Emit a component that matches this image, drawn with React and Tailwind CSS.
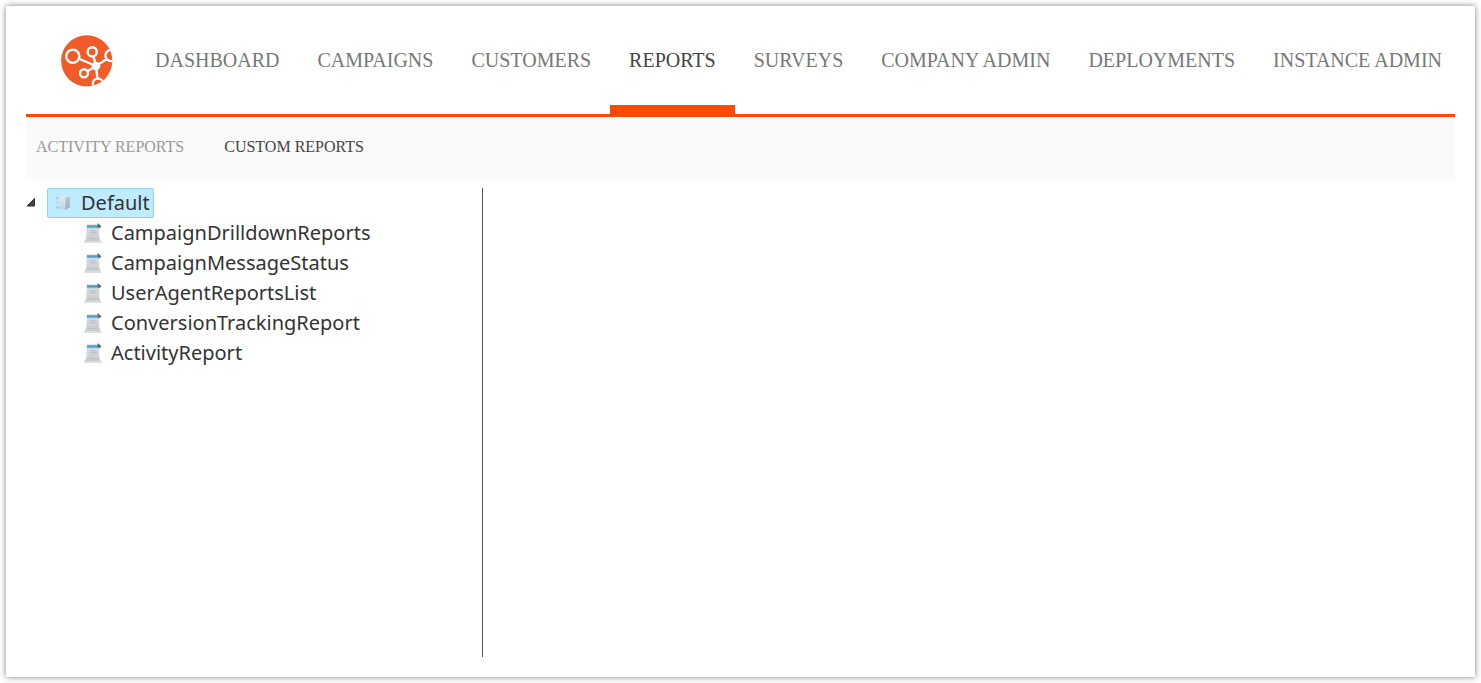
import React, { useState } from "react";

const tabs = [
  "DASHBOARD",
  "CAMPAIGNS",
  "CUSTOMERS",
  "REPORTS",
  "SURVEYS",
  "COMPANY ADMIN",
  "DEPLOYMENTS",
  "INSTANCE ADMIN",
];

const reports = [
  "CampaignDrilldownReports",
  "CampaignMessageStatus",
  "UserAgentReportsList",
  "ConversionTrackingReport",
  "ActivityReport",
];

function Logo() {
  return (
    <svg viewBox="0 0 52 52" className="size-13 shrink-0" role="img" aria-label="Home">
      <defs>
        <clipPath id="disc">
          <circle cx="25.7" cy="25.8" r="25.6" />
        </clipPath>
      </defs>
      <circle cx="25.7" cy="25.8" r="25.6" fill="#f15a29" />
      <g clipPath="url(#disc)" fill="none" stroke="#fff" strokeWidth="2.4">
        <circle cx="11.8" cy="21.2" r="6.6" />
        <circle cx="31.2" cy="16.8" r="4.6" />
        <circle cx="50" cy="20.5" r="5.6" />
        <circle cx="23" cy="38.2" r="4" />
        <circle cx="37" cy="48.8" r="5.2" />
        <path d="M18.5 24 35 31M32.3 21 35 31M45.5 24.2 35 31M26.8 36 35 31M35 31 36.5 43.8" />
        <circle cx="35" cy="31" r="4.3" fill="#fff" stroke="none" />
      </g>
    </svg>
  );
}

function CubeIcon() {
  return (
    <svg viewBox="0 0 20 20" className="size-5 shrink-0" aria-hidden="true">
      <defs>
        <linearGradient id="front" x1="0" y1="0" x2="0" y2="1">
          <stop offset="0" stopColor="#e2eef5" />
          <stop offset="1" stopColor="#bdd3e0" />
        </linearGradient>
        <linearGradient id="side" x1="0" y1="0" x2="0" y2="1">
          <stop offset="0" stopColor="#bccbd5" />
          <stop offset="1" stopColor="#9badba" />
        </linearGradient>
      </defs>
      <path d="M3 4.2 7 3.2V6L3 6.2Z" fill="#a9d3e7" />
      <path d="M3.5 8.5H7V11L3.5 10.6Z" fill="#b0daed" />
      <path d="M3 13 7 13.2V16L3 15Z" fill="#a6cfe2" />
      <path d="M6 3 11 1.8 17 3 12.3 4.8Z" fill="#d9e6ee" />
      <path d="M6 3 12.3 4.8V17L6 15.5Z" fill="url(#front)" />
      <path d="M12.3 4.8 17 3V14L12.3 17Z" fill="url(#side)" />
    </svg>
  );
}

function ReportIcon() {
  return (
    <svg viewBox="0 0 20 20" className="size-5 shrink-0" aria-hidden="true">
      <defs>
        <linearGradient id="paper" x1="0" y1="0" x2="0" y2="1">
          <stop offset="0" stopColor="#e6e8ea" />
          <stop offset="0.5" stopColor="#d2d6d9" />
          <stop offset="1" stopColor="#c3c8cc" />
        </linearGradient>
      </defs>
      <path d="M3.5 1H16.3V14.5L18.3 19.8H1.2L3.3 14.5Z" fill="url(#paper)" />
      <path d="M1.6 18 1 20H18.6L18 18Z" fill="#dcdee0" />
      <path d="M4 2.2H15V4.8H4Z" fill="#4f9fc6" />
      <path d="M4 4.8H15V5.6H4Z" fill="#a9cfe2" />
      <path d="M14.5 0 18.6 3.2 16 5.4 14.5 3.8Z" fill="#5f6b73" />
      <path d="M6.5 7.8h7M6.5 9.8h7" stroke="#b8bdc1" strokeWidth="1" />
      <path d="M5.5 15.5h9" stroke="#bcc1c5" strokeWidth="1" />
    </svg>
  );
}

export default function App() {
  const [open, setOpen] = useState(true);
  return (
    <div className="flex min-h-screen bg-white p-1.5 font-['Liberation_Serif',serif]">
      <div className="flex min-w-0 flex-1 flex-col bg-white px-5 pb-5 shadow-[0_0_6px_rgba(0,0,0,0.5)]">
        <header className="flex h-[111px] items-start border-b-3 border-[#fa4b00]">
          <a href="#home" className="mt-[29px] ml-[35px] shrink-0">
            <Logo />
          </a>
          <nav aria-label="Main" className="ml-[23px] flex h-full">
            {tabs.map((tab) => (
              <a
                key={tab}
                href="#tab"
                aria-current={tab === "REPORTS" ? "page" : undefined}
                className={
                  "h-full px-[19px] pt-[39px] text-xl leading-[30px] whitespace-nowrap " +
                  (tab === "REPORTS"
                    ? "border-b-9 border-[#fa4b00] text-[#444]"
                    : "text-[#777]")
                }
              >
                {tab}
              </a>
            ))}
          </nav>
        </header>
        <nav
          aria-label="Reports"
          className="flex h-[62px] items-center gap-10 bg-[#fafafa] px-2.5 pb-0.5 text-base"
        >
          <a href="#activity" className="text-[#999]">ACTIVITY REPORTS</a>
          <a href="#custom" aria-current="page" className="text-[#444]">CUSTOM REPORTS</a>
        </nav>
        <main className="mt-[9px] flex flex-1">
          <aside className="w-[457px] shrink-0 border-r border-[#555] font-['Noto_Sans',sans-serif] text-xl leading-[30px] text-[#333]">
            <div className="flex items-center">
              <button
                type="button"
                aria-label="Toggle Default"
                aria-expanded={open}
                onClick={() => setOpen(!open)}
                className="flex h-[30px] w-[21px] items-center"
              >
                <svg viewBox="0 0 10 10" className="size-2.5" aria-hidden="true">
                  <path d="M8.5 .5V8H1Z" fill="#444" stroke="#333" strokeWidth="1" />
                </svg>
              </button>
              <button
                type="button"
                className="flex h-[30px] items-center gap-2 rounded-xs border border-[#99cfe3] bg-[#beebff] pr-[3px] pl-[5px]"
              >
                <CubeIcon />
                Default
              </button>
            </div>
            {open && (
              <ul className="pl-[57px]">
                {reports.map((r) => (
                  <li key={r}>
                    <button type="button" className="flex h-[30px] items-center gap-2">
                      <ReportIcon />
                      {r}
                    </button>
                  </li>
                ))}
              </ul>
            )}
          </aside>
          <section aria-label="Report" className="flex-1" />
        </main>
      </div>
    </div>
  );
}
